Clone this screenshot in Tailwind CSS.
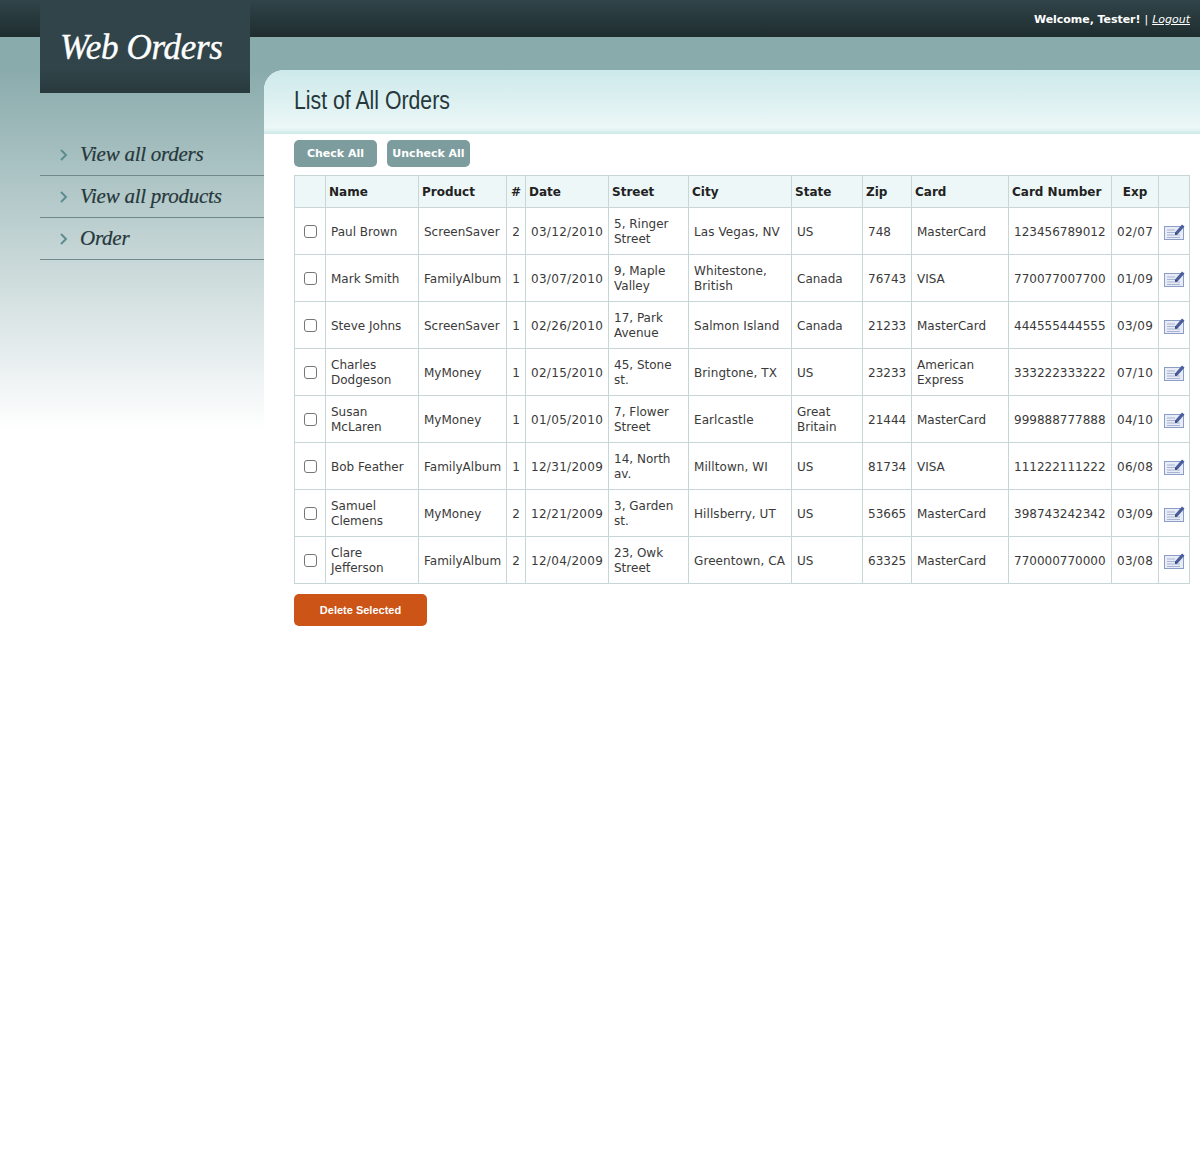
<!DOCTYPE html>
<html><head><meta charset="utf-8"><script src="https://cdn.jsdelivr.net/npm/@tailwindcss/browser@4"></script></head>
<body class="bg-white font-['DejaVu_Sans',sans-serif] text-[12px] leading-[15px] text-[#3a3a3a]">
<div class="relative min-h-[1162px] bg-[linear-gradient(to_bottom,#8aabac_37px,#8aabac_70px,#ffffff_430px)]">
<header class="h-[37px] bg-[linear-gradient(to_bottom,#304449,#1f2d2f)] flex justify-end items-start pt-[13px] pr-[10px] text-[11px] leading-[14px] text-white">
<span class="font-bold tracking-[-0.05px]">Welcome, Tester!</span><span class="mx-[4px]">|</span><a class="italic underline">Logout</a>
</header>
<div class="absolute left-[40px] top-0 w-[210px] h-[93px] bg-[linear-gradient(to_bottom,#304449_75%,#293a3e)] pl-[20px] pt-[28px] font-['Liberation_Serif',serif] italic text-white text-[35px] leading-[40px] tracking-[-0.3px] [-webkit-text-stroke:0.4px_white]">Web Orders</div>
<div class="flex items-start pt-[33px]">
<nav class="w-[224px] ml-[40px] mt-[64px] shrink-0 font-['Liberation_Serif',serif] italic text-[#26383b] text-[21px] tracking-[-0.25px] [-webkit-text-stroke:0.2px_#26383b]">
<a class="flex items-center h-[42px] border-b border-[#6f8a8c] pl-[20px]"><svg class="w-[8px] h-[12px] mr-[12px]" viewBox="0 0 8 12" fill="none" stroke="#5d8d90" stroke-width="2"><path d="M1 1l5 5-5 5"/></svg>View all orders</a>
<a class="flex items-center h-[42px] border-b border-[#6f8a8c] pl-[20px]"><svg class="w-[8px] h-[12px] mr-[12px]" viewBox="0 0 8 12" fill="none" stroke="#5d8d90" stroke-width="2"><path d="M1 1l5 5-5 5"/></svg>View all products</a>
<a class="flex items-center h-[42px] border-b border-[#6f8a8c] pl-[20px]"><svg class="w-[8px] h-[12px] mr-[12px]" viewBox="0 0 8 12" fill="none" stroke="#5d8d90" stroke-width="2"><path d="M1 1l5 5-5 5"/></svg>Order</a>
</nav>
<main class="flex-1 bg-white rounded-tl-[20px] min-h-[1092px]">
<div class="h-[64px] rounded-tl-[20px] bg-[linear-gradient(to_bottom,#cde9ea_0,#ecf7f7_58px,#cde8e8_64px)] pl-[30px] pt-[13px] font-['Liberation_Sans',sans-serif] text-[#26383b] text-[26px] leading-[34px]"><span class="inline-block origin-left scale-x-[.817]">List of All Orders</span></div>
<div class="pl-[30px] pr-[10px]">
<div class="flex gap-[10px] pt-[6px] pb-[8px]">
<button class="w-[83px] h-[27px] rounded-[5px] bg-[#7d9c9d] text-white font-bold text-[11px]">Check All</button>
<button class="w-[83px] h-[27px] rounded-[5px] bg-[#7d9c9d] text-white font-bold text-[11px]">Uncheck All</button>
</div>
<table class="border-collapse table-fixed w-[895px] border border-[#c8d6d8]">
<colgroup><col class="w-[31px]"><col class="w-[93px]"><col class="w-[88px]"><col class="w-[19px]"><col class="w-[83px]"><col class="w-[80px]"><col class="w-[103px]"><col class="w-[71px]"><col class="w-[49px]"><col class="w-[97px]"><col class="w-[103px]"><col class="w-[47px]"><col class="w-[31px]"></colgroup>
<thead class="bg-[#eef7f8] text-[#222] font-bold text-left [&_th]:h-[32px] [&_th]:border [&_th]:border-[#c8d6d8] [&_th]:px-[3px] [&_th]:pt-[1px] [&_th]:pb-0">
<tr><th></th><th>Name</th><th>Product</th><th class="text-center">#</th><th>Date</th><th>Street</th><th>City</th><th>State</th><th>Zip</th><th>Card</th><th>Card Number</th><th class="text-center">Exp</th><th></th></tr>
</thead>
<tbody class="[&_td]:h-[47px] [&_td]:border [&_td]:border-[#c8d6d8] [&_td]:px-[5px] [&_td]:pt-[2px] [&_td]:pb-0 [&_td:first-child]:pt-0 [&_td:last-child]:pt-0 [&_td:first-child]:text-center [&_td:nth-child(4)]:text-center [&_td:nth-child(12)]:text-center [&_td:nth-child(5)]:tracking-[0.3px] [&_td:nth-child(12)]:tracking-[0.3px] [&_td:nth-child(7)]:tracking-[0.08px] [&_td:last-child]:px-[4px]">
<tr><td><input type="checkbox" class="appearance-none block mx-auto w-[13px] h-[13px] border border-[#767676] rounded-[3px] bg-white"></td><td>Paul Brown</td><td>ScreenSaver</td><td>2</td><td>03/12/2010</td><td>5, Ringer Street</td><td>Las Vegas, NV</td><td>US</td><td>748</td><td>MasterCard</td><td>123456789012</td><td>02/07</td><td><svg class="block mx-auto w-[21px] h-[19px]" viewBox="0 0 21 19"><rect x="0.5" y="4.5" width="19" height="13" fill="#e8ecf6" stroke="#8c9dc6"/><path d="M3 8h8M3 10.5h8M3 13h13M3 15.5h13" stroke="#a9b4d2"/><path d="M11.5 13l-.5-2.5 7-8 2.5 2-7 8z" fill="#4a5e9c"/><path d="M11.5 13l-.5-2.5 2 1.5z" fill="#1f2d5c"/></svg></td></tr>
<tr><td><input type="checkbox" class="appearance-none block mx-auto w-[13px] h-[13px] border border-[#767676] rounded-[3px] bg-white"></td><td>Mark Smith</td><td>FamilyAlbum</td><td>1</td><td>03/07/2010</td><td>9, Maple Valley</td><td>Whitestone, British</td><td>Canada</td><td>76743</td><td>VISA</td><td>770077007700</td><td>01/09</td><td><svg class="block mx-auto w-[21px] h-[19px]" viewBox="0 0 21 19"><rect x="0.5" y="4.5" width="19" height="13" fill="#e8ecf6" stroke="#8c9dc6"/><path d="M3 8h8M3 10.5h8M3 13h13M3 15.5h13" stroke="#a9b4d2"/><path d="M11.5 13l-.5-2.5 7-8 2.5 2-7 8z" fill="#4a5e9c"/><path d="M11.5 13l-.5-2.5 2 1.5z" fill="#1f2d5c"/></svg></td></tr>
<tr><td><input type="checkbox" class="appearance-none block mx-auto w-[13px] h-[13px] border border-[#767676] rounded-[3px] bg-white"></td><td>Steve Johns</td><td>ScreenSaver</td><td>1</td><td>02/26/2010</td><td>17, Park Avenue</td><td>Salmon Island</td><td>Canada</td><td>21233</td><td>MasterCard</td><td>444555444555</td><td>03/09</td><td><svg class="block mx-auto w-[21px] h-[19px]" viewBox="0 0 21 19"><rect x="0.5" y="4.5" width="19" height="13" fill="#e8ecf6" stroke="#8c9dc6"/><path d="M3 8h8M3 10.5h8M3 13h13M3 15.5h13" stroke="#a9b4d2"/><path d="M11.5 13l-.5-2.5 7-8 2.5 2-7 8z" fill="#4a5e9c"/><path d="M11.5 13l-.5-2.5 2 1.5z" fill="#1f2d5c"/></svg></td></tr>
<tr><td><input type="checkbox" class="appearance-none block mx-auto w-[13px] h-[13px] border border-[#767676] rounded-[3px] bg-white"></td><td>Charles Dodgeson</td><td>MyMoney</td><td>1</td><td>02/15/2010</td><td>45, Stone st.</td><td>Bringtone, TX</td><td>US</td><td>23233</td><td>American Express</td><td>333222333222</td><td>07/10</td><td><svg class="block mx-auto w-[21px] h-[19px]" viewBox="0 0 21 19"><rect x="0.5" y="4.5" width="19" height="13" fill="#e8ecf6" stroke="#8c9dc6"/><path d="M3 8h8M3 10.5h8M3 13h13M3 15.5h13" stroke="#a9b4d2"/><path d="M11.5 13l-.5-2.5 7-8 2.5 2-7 8z" fill="#4a5e9c"/><path d="M11.5 13l-.5-2.5 2 1.5z" fill="#1f2d5c"/></svg></td></tr>
<tr><td><input type="checkbox" class="appearance-none block mx-auto w-[13px] h-[13px] border border-[#767676] rounded-[3px] bg-white"></td><td>Susan McLaren</td><td>MyMoney</td><td>1</td><td>01/05/2010</td><td>7, Flower Street</td><td>Earlcastle</td><td>Great Britain</td><td>21444</td><td>MasterCard</td><td>999888777888</td><td>04/10</td><td><svg class="block mx-auto w-[21px] h-[19px]" viewBox="0 0 21 19"><rect x="0.5" y="4.5" width="19" height="13" fill="#e8ecf6" stroke="#8c9dc6"/><path d="M3 8h8M3 10.5h8M3 13h13M3 15.5h13" stroke="#a9b4d2"/><path d="M11.5 13l-.5-2.5 7-8 2.5 2-7 8z" fill="#4a5e9c"/><path d="M11.5 13l-.5-2.5 2 1.5z" fill="#1f2d5c"/></svg></td></tr>
<tr><td><input type="checkbox" class="appearance-none block mx-auto w-[13px] h-[13px] border border-[#767676] rounded-[3px] bg-white"></td><td>Bob Feather</td><td>FamilyAlbum</td><td>1</td><td>12/31/2009</td><td>14, North av.</td><td>Milltown, WI</td><td>US</td><td>81734</td><td>VISA</td><td>111222111222</td><td>06/08</td><td><svg class="block mx-auto w-[21px] h-[19px]" viewBox="0 0 21 19"><rect x="0.5" y="4.5" width="19" height="13" fill="#e8ecf6" stroke="#8c9dc6"/><path d="M3 8h8M3 10.5h8M3 13h13M3 15.5h13" stroke="#a9b4d2"/><path d="M11.5 13l-.5-2.5 7-8 2.5 2-7 8z" fill="#4a5e9c"/><path d="M11.5 13l-.5-2.5 2 1.5z" fill="#1f2d5c"/></svg></td></tr>
<tr><td><input type="checkbox" class="appearance-none block mx-auto w-[13px] h-[13px] border border-[#767676] rounded-[3px] bg-white"></td><td>Samuel Clemens</td><td>MyMoney</td><td>2</td><td>12/21/2009</td><td>3, Garden st.</td><td>Hillsberry, UT</td><td>US</td><td>53665</td><td>MasterCard</td><td>398743242342</td><td>03/09</td><td><svg class="block mx-auto w-[21px] h-[19px]" viewBox="0 0 21 19"><rect x="0.5" y="4.5" width="19" height="13" fill="#e8ecf6" stroke="#8c9dc6"/><path d="M3 8h8M3 10.5h8M3 13h13M3 15.5h13" stroke="#a9b4d2"/><path d="M11.5 13l-.5-2.5 7-8 2.5 2-7 8z" fill="#4a5e9c"/><path d="M11.5 13l-.5-2.5 2 1.5z" fill="#1f2d5c"/></svg></td></tr>
<tr><td><input type="checkbox" class="appearance-none block mx-auto w-[13px] h-[13px] border border-[#767676] rounded-[3px] bg-white"></td><td>Clare Jefferson</td><td>FamilyAlbum</td><td>2</td><td>12/04/2009</td><td>23, Owk Street</td><td>Greentown, CA</td><td>US</td><td>63325</td><td>MasterCard</td><td>770000770000</td><td>03/08</td><td><svg class="block mx-auto w-[21px] h-[19px]" viewBox="0 0 21 19"><rect x="0.5" y="4.5" width="19" height="13" fill="#e8ecf6" stroke="#8c9dc6"/><path d="M3 8h8M3 10.5h8M3 13h13M3 15.5h13" stroke="#a9b4d2"/><path d="M11.5 13l-.5-2.5 7-8 2.5 2-7 8z" fill="#4a5e9c"/><path d="M11.5 13l-.5-2.5 2 1.5z" fill="#1f2d5c"/></svg></td></tr>
</tbody>
</table>
<button class="mt-[10px] w-[133px] h-[32px] rounded-[5px] bg-[#cb5416] text-white font-bold font-['Liberation_Sans',sans-serif] text-[11px]">Delete Selected</button>
</div>
</main>
</div>
</div>
</body></html>
